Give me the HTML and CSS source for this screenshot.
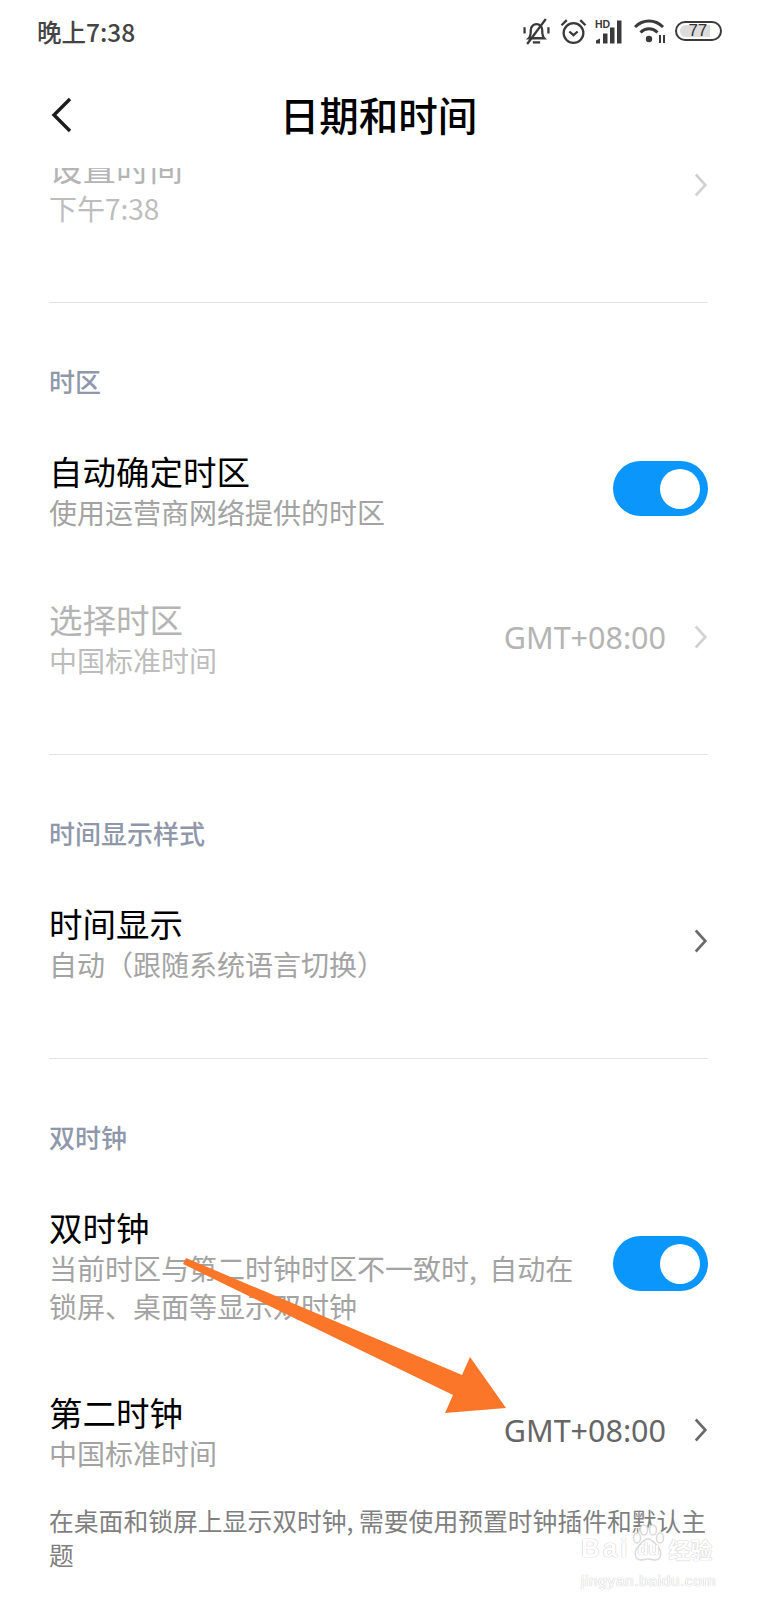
FILE: index.html
```html
<!DOCTYPE html>
<html lang="zh-CN">
<head>
<meta charset="utf-8">
<title>日期和时间</title>
<link rel="stylesheet" href="styles.css">
</head>
<body>
<div class="page">
  <div class="status">
    <span class="clock">晚上7:38</span>
    <div class="status-icons">
      <svg class="ic-bell" viewBox="0 0 26 26"><g fill="none" stroke="#3a3a3a" stroke-width="2.2"><path d="M5.5 19.5c2-2 2-5 2-8 0-3 2.500-5.500 5.500-5.500s5.500 2.500 5.500 5.500c0 3 0 6 2 8z"/><path d="M9.500 23.500h7"/><path d="M4 25L22 1"/><path d="M1.500 9v6M24.500 9v6"/></g></svg>
      <svg class="ic-alarm" viewBox="0 0 26 26"><g fill="none" stroke="#3a3a3a" stroke-width="2.200"><circle cx="13" cy="14.500" r="9.500"/><path d="M9 13l4 3.500 4-3.500"/><path d="M1.500 7l5-5M24.500 7l-5-5"/></g></svg>
      <svg class="ic-signal" viewBox="0 0 30 26"><text x="0" y="9" class="hd">HD</text><g fill="#3a3a3a"><path d="M1 25v-3l4-2v5z"/><rect x="8" y="15" width="4.500" height="10"/><rect x="15" y="9" width="4.500" height="16"/><rect x="22" y="2" width="4.500" height="23"/></g></svg>
      <svg class="ic-wifi" viewBox="0 0 32 26"><g fill="none" stroke="#3a3a3a" stroke-width="3"><path d="M1 9c8-8 20-8 28 0"/><path d="M6.500 14.500c5-5 12-5 17 0"/></g><circle cx="15" cy="21" r="3.200" fill="#3a3a3a"/><path d="M26 17v8M30 17v8" stroke="#3a3a3a" stroke-width="2"/></svg>
      <div class="battery"><span class="battery-level">77</span></div>
    </div>
  </div>
  <header class="nav">
    <svg class="back" viewBox="0 0 24 36"><path d="M20 2L4 18l16 16" fill="none" stroke="#1c1c1c" stroke-width="3.400"/></svg>
    <h1>日期和时间</h1>
  </header>
  <main class="scroll">
    <section class="group group-first">
      <div class="row row-clipped">
        <div class="text"><div class="title dim">设置时间</div><div class="sub dim2">下午7:38</div></div>
        <svg class="chev chev-dim" viewBox="0 0 16 28"><path d="M2 2l11 12L2 26" fill="none" stroke-width="3"/></svg>
      </div>
    </section>
    <section class="group">
      <h2>时区</h2>
      <div class="row">
        <div class="text"><div class="title">自动确定时区</div><div class="sub">使用运营商网络提供的时区</div></div>
        <div class="toggle"><i></i></div>
      </div>
      <div class="row row-gap">
        <div class="text"><div class="title dim">选择时区</div><div class="sub dim2">中国标准时间</div></div>
        <span class="value dim">GMT+08:00</span>
        <svg class="chev chev-dim" viewBox="0 0 16 28"><path d="M2 2l11 12L2 26" fill="none" stroke-width="3"/></svg>
      </div>
    </section>
    <section class="group">
      <h2>时间显示样式</h2>
      <div class="row">
        <div class="text"><div class="title">时间显示</div><div class="sub">自动（跟随系统语言切换）</div></div>
        <svg class="chev" viewBox="0 0 16 28"><path d="M2 2l11 12L2 26" fill="none" stroke-width="3"/></svg>
      </div>
    </section>
    <section class="group group-last">
      <h2>双时钟</h2>
      <div class="row">
        <div class="text"><div class="title">双时钟</div><div class="sub">当前时区与第二时钟时区不一致时,&nbsp; 自动在<br>锁屏、桌面等显示双时钟</div></div>
        <div class="toggle"><i></i></div>
      </div>
      <div class="row row-gap2">
        <div class="text"><div class="title">第二时钟</div><div class="sub">中国标准时间</div></div>
        <span class="value">GMT+08:00</span>
        <svg class="chev" viewBox="0 0 16 28"><path d="M2 2l11 12L2 26" fill="none" stroke-width="3"/></svg>
      </div>
      <p class="foot">在桌面和锁屏上显示双时钟, 需要使用预置时钟插件和默认主题</p>
    </section>
  </main>
  <svg class="arrow" viewBox="0 0 757 1600"><polygon points="186,1258 462,1375 470,1357 506,1408 445,1413 453,1395 183,1264" fill="#fb7628"/></svg>
  <div class="mark">
    <div class="mark-top">
      <span class="mark-bai">Bai</span>
      <span class="mark-paw">
        <svg viewBox="0 0 36 38"><g fill="#fff" stroke="#dadada" stroke-width="1.500"><path d="M18 15c5 0 7 5 10 8 4 4 4 13-3 13-3 0-4-1-7-1s-4 1-7 1c-7 0-7-9-3-13 3-3 5-8 10-8z"/><ellipse cx="7" cy="14" rx="3.500" ry="5"/><ellipse cx="14" cy="6" rx="3.500" ry="5"/><ellipse cx="23" cy="6" rx="3.500" ry="5"/><ellipse cx="30" cy="14" rx="3.500" ry="5"/></g></svg>
        <span class="mark-du">du</span>
      </span>
      <span class="mark-cn">经验</span>
    </div>
    <span class="mark-url">jingyan.baidu.com</span>
  </div>
</div>
</body>
</html>
```
FILE: styles.css
```css
* { box-sizing: border-box; }
html, body { margin: 0; padding: 0; background: #fff; }
body { font-family: "Noto Sans CJK SC", "Noto Sans", sans-serif; }
.page { position: relative; width: 757px; height: 1600px; overflow: hidden; background: #fff; }
.status { height: 62px; padding: 0 35px 0 37px; display: flex; align-items: center; justify-content: space-between; }
.clock { font-size: 24.500px; font-weight: 500; color: #444; }
.status-icons { display: flex; align-items: center; gap: 7px; }
.status-icons svg { display: block; }
.ic-bell { width: 27px; height: 27px; margin-right: 3px; }
.ic-alarm { width: 27px; height: 27px; margin-right: 1px; }
.ic-signal { width: 30px; height: 27px; margin-right: 2px; }
.ic-wifi { width: 32px; height: 26px; }
.hd { font: 700 10.500px "Liberation Sans", sans-serif; fill: #3a3a3a; }
.battery { width: 47px; height: 20px; border: 2px solid #3a3a3a; border-radius: 10px; padding: 2px 3px; margin-left: 2px; display: flex; }
.battery-level { width: 82%; background: #dcdcdc; border-radius: 6px 0 0 6px; padding-right: 3px; font: 17px/12px "Liberation Sans", sans-serif; color: #333; text-align: right; }
.nav { height: 106px; position: relative; display: flex; align-items: center; justify-content: center; }
.nav h1 { margin: 0; font-size: 39.500px; font-weight: 500; color: #000; line-height: 1; padding-bottom: 2px; }
.back { position: absolute; left: 50px; top: 35px; width: 24px; height: 36px; }
.scroll { padding: 0 49px; }
.group { border-bottom: 1px solid #e4e4e4; padding-bottom: 75px; }
.group-last { border-bottom: 0; padding-bottom: 0; }
.group-first { height: 135px; overflow: hidden; padding-bottom: 0; }
h2 { margin: 60px 0 0; font-size: 26px; font-weight: 500; color: #8f97aa; line-height: 36px; height: 36px; }
.row { display: flex; align-items: center; margin-top: 51px; }
.row-clipped { margin-top: -22px; }
.row-gap { margin-top: 67px; }
.row-gap2 { margin-top: 66px; }
.text { flex: 1; min-width: 0; }
.title { font-size: 33.500px; line-height: 42px; color: #000; }
.sub { font-size: 28px; line-height: 38px; color: #a3a3a3; margin-top: 1px; }
.title.dim { color: #b4b4b4; }
.sub.dim2 { color: #bdbdbd; }
.value { font-family: "Noto Sans", sans-serif; font-size: 30.500px; color: #666; margin-right: 28px; margin-bottom: 4px; }
.value.dim { color: #b4b4b4; }
.chev { width: 14px; height: 26px; stroke: #6a6a6a; flex: none; margin-bottom: 4px; }
.chev-dim { stroke: #d2d2d2; }
.toggle { width: 95px; height: 55px; border-radius: 28px; background: #0a96fb; display: flex; align-items: center; justify-content: flex-end; padding-right: 8px; flex: none; margin-bottom: 4px; }
.toggle i { display: block; width: 40px; height: 40px; border-radius: 50%; background: #fff; }
.arrow { position: absolute; left: 0; top: 0; width: 757px; height: 1600px; pointer-events: none; }
.foot { margin: 31px 0 0; font-size: 24.800px; line-height: 34px; color: #7f7f7f; }
.mark { position: absolute; left: 581px; top: 1524px; display: flex; flex-direction: column; color: #fff; text-shadow: 0 0 1px #c4c4c4, 0 0 1px #c4c4c4; }
.mark-top { display: flex; align-items: flex-end; height: 38px; }
.mark-bai { font: 700 26px/28px "Liberation Sans", sans-serif; letter-spacing: 3px; }
.mark-paw { position: relative; width: 36px; height: 38px; margin-right: 2px; }
.mark-paw svg { display: block; width: 36px; height: 38px; }
.mark-du { position: absolute; left: 7px; top: 15px; font: 700 18px/20px "Liberation Sans", sans-serif; }
.mark-cn { font: 700 22px/28px "Noto Sans CJK SC", sans-serif; }
.mark-url { margin-top: 9px; font: 15.500px/20px "Liberation Sans", sans-serif; letter-spacing: .6px; white-space: nowrap; }
```
